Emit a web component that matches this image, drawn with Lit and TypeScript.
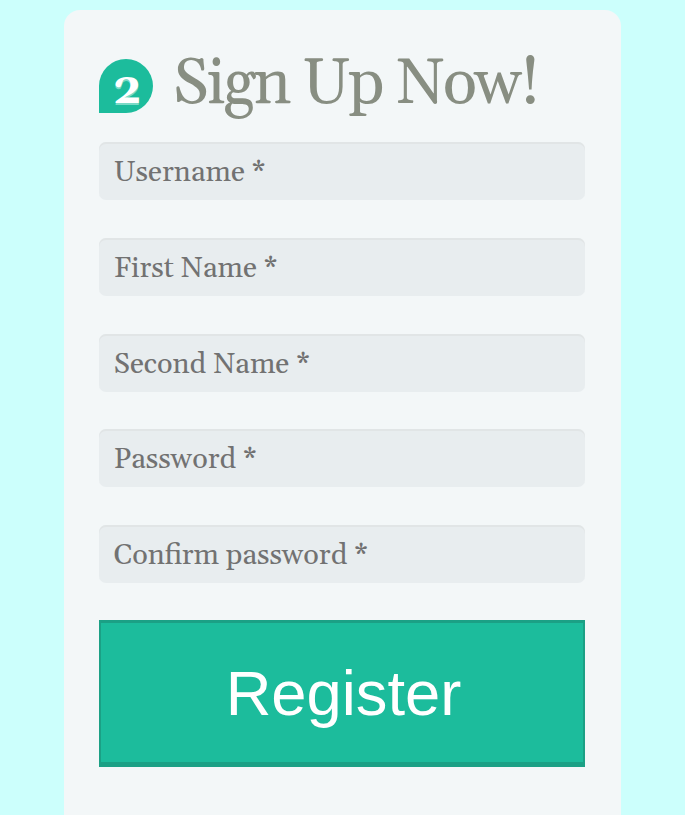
import { LitElement, html, css } from "lit";
import { customElement } from "lit/decorators.js";

@customElement("app-root")
export class AppRoot extends LitElement {
  static styles = css`
    :host {
      display: block;
      height: 815px;
      overflow: hidden;
      background: #ccfffc;
      font-family: Georgia, Gelasio, "Liberation Serif", serif;
    }
    .page {
      padding-top: 9.5px;
    }
    .card {
      box-sizing: border-box;
      width: 557.5px;
      height: 840px;
      margin: 0 0 0 63.5px;
      padding: 48px 36px 0 35.5px;
      border-radius: 16px;
      background: #f3f7f8;
    }
    header {
      display: flex;
      height: 84.7px;
    }
    .badge {
      width: 54px;
      height: 54px;
      margin-top: 1px;
      border-radius: 27px 27px 27px 0;
      background: #1cbc9c;
      color: #fff;
      font-size: 45px;
      line-height: 61px;
      text-align: center;
      text-indent: 2px;
      text-shadow: 0 2px 0 #7bdac6;
      font-weight: bold;
    }
    h1 {
      margin: 0 0 0 20px;
      font-size: 63.8px;
      font-weight: 400;
      line-height: 53px;
      letter-spacing: -2.15px;
      color: #888e82;
      white-space: nowrap;
    }
    form {
      display: flex;
      flex-direction: column;
      gap: 37.7px;
    }
    input {
      display: block;
      box-sizing: border-box;
      width: 486px;
      height: 58px;
      margin: 0;
      padding: 3px 14.7px 0;
      border: 0;
      border-radius: 7px;
      outline: 0;
      background: #e8edef;
      box-shadow: inset 0 2px 0 #e1e5e6;
      font: 28.9px Georgia, Gelasio, "Liberation Serif", serif;
    }
    input::placeholder {
      color: #727272;
      opacity: 1;
    }
    button {
      box-sizing: border-box;
      width: 486px;
      height: 147px;
      margin: -0.7px 0 0;
      padding: 1px 0 0 3px;
      border: 2px solid #1ba085;
      border-bottom-width: 5px;
      border-top-width: 3px;
      border-radius: 0;
      background: #1cbc9c;
      color: #fff;
      font: 63.3px "Liberation Sans", Arial, sans-serif;
    }
  `;

  private fields = ["Username *", "First Name *", "Second Name *", "Password *", "Confirm password *"];

  render() {
    return html`<div class="page">
      <section class="card">
        <header>
          <span class="badge">2</span>
          <h1>Sign Up Now!</h1>
        </header>
        <form>
          ${this.fields.map((f) => html`<input placeholder=${f} aria-label=${f} />`)}
          <button type="button">Register</button>
        </form>
      </section>
    </div>`;
  }
}
